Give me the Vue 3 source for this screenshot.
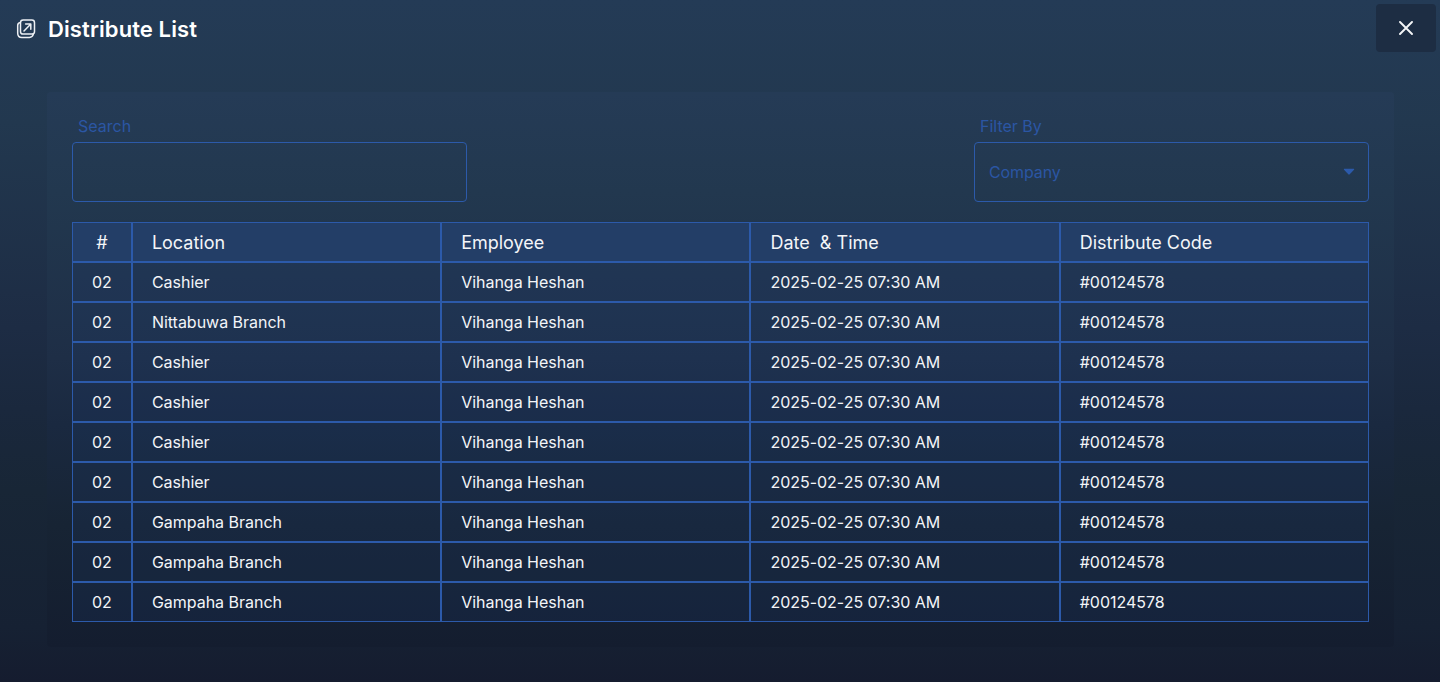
<script setup>
const columns = ['#', 'Location', 'Employee', 'Date \u00a0& Time', 'Distribute Code']
const locations = [
  'Cashier', 'Nittabuwa Branch', 'Cashier', 'Cashier', 'Cashier',
  'Cashier', 'Gampaha Branch', 'Gampaha Branch', 'Gampaha Branch'
]
const rows = locations.map((l) => ['02', l, 'Vihanga Heshan', '2025-02-25 07:30 AM', '#00124578'])
</script>

<template>
  <div class="page">
    <header class="topbar">
      <svg class="logo" width="20" height="20" viewBox="0 0 20 20" fill="none" stroke="#edf0f4" stroke-width="1.5" stroke-linecap="round" stroke-linejoin="round">
        <rect x="4.5" y="1.1" width="14" height="14" rx="2.6" />
        <path d="M4.2 3.4C2.5 3.7 1.7 4.5 1.7 6.4V14.2C1.7 17 3 18.4 5.8 18.4H13.4C15.6 18.4 16.8 17.6 17.3 15.2" />
        <path d="M8 12L14.6 5.2M9.6 4.9H14.8V10.2" />
      </svg>
      <h1>Distribute List</h1>
      <button class="close" aria-label="Close">
        <svg width="14" height="14" viewBox="0 0 14 14" fill="none" stroke="#f4f5f7" stroke-width="1.9" stroke-linecap="round">
          <path d="M1 1L13 13M13 1L1 13" />
        </svg>
      </button>
    </header>
    <main class="panel">
      <div class="filters">
        <div class="field">
          <label>Search</label>
          <div class="control"></div>
        </div>
        <div class="field">
          <label>Filter By</label>
          <div class="control">
            <span>Company</span>
            <svg width="12" height="8" viewBox="0 0 12 8"><path d="M1.2 .8H10.8Q11.6 1 11 1.7L6.7 6.3Q6 7 5.3 6.3L1 1.7Q.4 1 1.2 .8Z" fill="#2c5aaa" /></svg>
          </div>
        </div>
      </div>
      <div class="table">
        <div class="row head">
          <div v-for="c in columns" :key="c" class="cell">{{ c }}</div>
        </div>
        <div v-for="(r, i) in rows" :key="i" class="row">
          <div v-for="(v, j) in r" :key="j" class="cell">{{ v }}</div>
        </div>
      </div>
    </main>
  </div>
</template>

<style>
body { margin: 0; background: #151c2f; }
</style>

<style scoped>
.page {
  box-sizing: border-box;
  height: 682px;
  overflow: hidden;
  font-family: Inter, sans-serif;
  color: #f3f5f8;
  background: linear-gradient(180deg, #243b56 0%, #22384f 18%, #1d2c44 48%, #1a283d 60%, #182636 72%, #162133 92%, #151c2f 100%);
}
.topbar {
  box-sizing: border-box;
  height: 92px;
  padding: 4px 4px 0 16px;
  display: flex;
  align-items: flex-start;
}
.logo { margin-top: 15px; flex: none; }
h1 {
  margin: 10px 0 0 12px;
  font-size: 22px;
  line-height: 30px;
  font-weight: 600;
  letter-spacing: 0.1px;
  color: #fff;
}
.close {
  margin-left: auto;
  width: 60px;
  height: 48px;
  padding: 0;
  border: 0;
  border-radius: 4px;
  background: #1d2d43;
  display: flex;
  align-items: center;
  justify-content: center;
}
.panel {
  box-sizing: border-box;
  height: 555px;
  margin: 0 46px 0 47px;
  padding: 24px 25px;
  border-radius: 4px;
  background: linear-gradient(180deg, #253b56 0%, #22384f 18%, #1e2e46 48%, #1a2940 60%, #172434 78%, #141d2f 100%);
}
.filters {
  display: flex;
  justify-content: space-between;
  margin-bottom: 20px;
}
.field { width: 395px; color: #2b56a4; font-size: 16px; }
label {
  display: block;
  height: 26px;
  padding-left: 6px;
  line-height: 21px;
}
.control {
  box-sizing: border-box;
  height: 60px;
  padding: 0 13px 0 14px;
  border: 1px solid #2c5aaa;
  border-radius: 4px;
  display: flex;
  align-items: center;
  justify-content: space-between;
}
.control span { letter-spacing: -0.1px; }
.table { background: rgba(36, 76, 150, 0.12); }
.row {
  display: grid;
  grid-template-columns: 59.9px repeat(4, 1fr);
  height: 40px;
}
.cell {
  border: 1px solid #2c5aaa;
  padding-left: 19px;
  font-size: 16px;
  line-height: 38px;
  letter-spacing: -0.02px;
  white-space: nowrap;
}
.head .cell {
  font-size: 18px;
  line-height: 39px;
  height: 38px;
  letter-spacing: 0;
  background: #233e67;
}
.cell:first-child { padding-left: 0; text-align: center; }
</style>
